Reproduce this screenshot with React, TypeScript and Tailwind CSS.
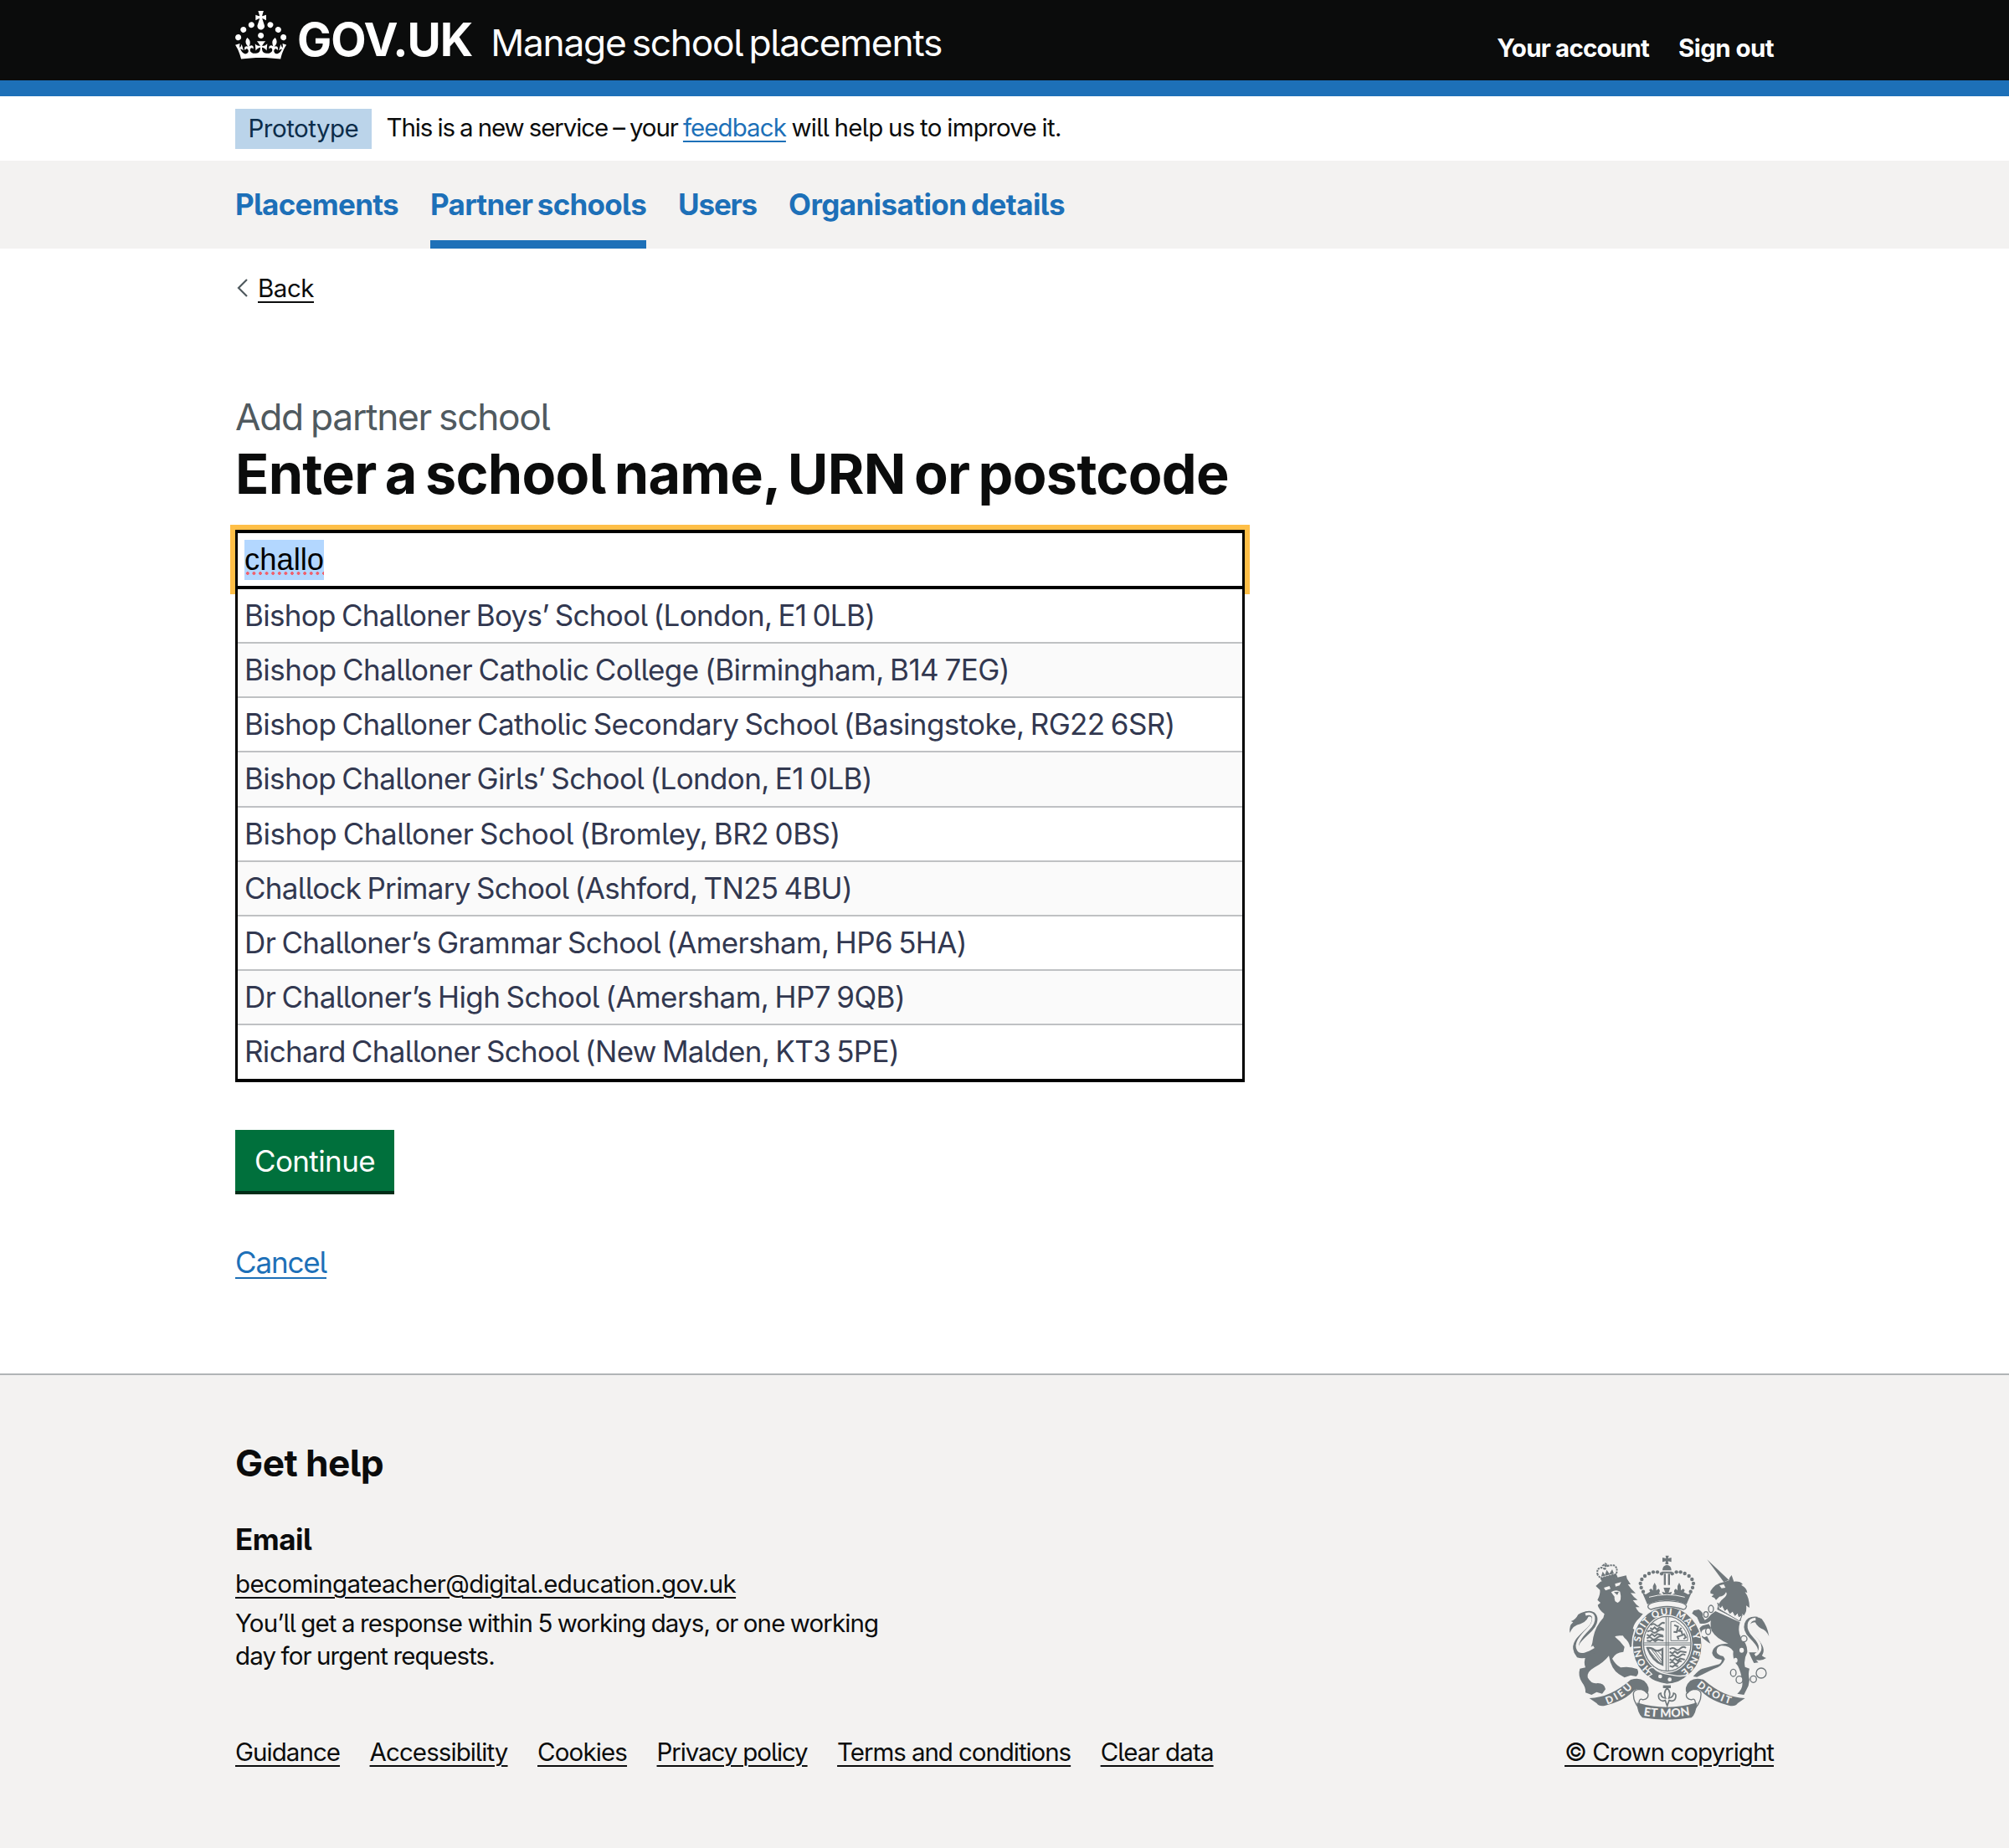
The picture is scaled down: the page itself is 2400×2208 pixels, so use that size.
import React from "react";

const schools = [
  { name: "Bishop Challoner Boys’ School (London, E1 0LB)", tracking: "tracking-[-0.7px]" },
  { name: "Bishop Challoner Catholic College (Birmingham, B14 7EG)", tracking: "tracking-[-0.54px]" },
  { name: "Bishop Challoner Catholic Secondary School (Basingstoke, RG22 6SR)", tracking: "tracking-[-0.62px]" },
  { name: "Bishop Challoner Girls’ School (London, E1 0LB)", tracking: "tracking-[-0.65px]" },
  { name: "Bishop Challoner School (Bromley, BR2 0BS)", tracking: "tracking-[-0.45px]" },
  { name: "Challock Primary School (Ashford, TN25 4BU)", tracking: "tracking-[-0.7px]" },
  { name: "Dr Challoner’s Grammar School (Amersham, HP6 5HA)", tracking: "tracking-[-0.63px]" },
  { name: "Dr Challoner’s High School (Amersham, HP7 9QB)", tracking: "tracking-[-0.57px]" },
  { name: "Richard Challoner School (New Malden, KT3 5PE)", tracking: "tracking-[-0.67px]" },
];

const footerLinks = [
  { label: "Guidance", tracking: "tracking-[-0.96px]" },
  { label: "Accessibility", tracking: "tracking-[-0.91px]" },
  { label: "Cookies", tracking: "tracking-[-0.86px]" },
  { label: "Privacy policy", tracking: "tracking-[-1.11px]" },
  { label: "Terms and conditions", tracking: "tracking-[-1.06px]" },
  { label: "Clear data", tracking: "tracking-[-0.87px]" },
];

function Crown() {
  return (
    <svg viewBox="0 0 32 30" className="mt-[13px] h-[57.5px] w-[61.3px] fill-white" aria-hidden="true">
      <path d="M22.6 10.4c-1 .4-2-.1-2.4-1-.4-.9.1-2 1-2.4.9-.4 2 .1 2.4 1s-.1 2-1 2.4m-5.9 6.7c-.9.4-2-.1-2.4-1-.4-.9.1-2 1-2.4.9-.4 2 .1 2.4 1s-.1 2-1 2.4m10.8-3.7c-1 .4-2-.1-2.4-1-.4-.9.1-2 1-2.4.9-.4 2 .1 2.4 1s0 2-1 2.4m3.3 4.8c-1 .4-2-.1-2.4-1-.4-.9.1-2 1-2.4.9-.4 2 .1 2.4 1s-.1 2-1 2.4M17 4.7l2.3 1.2V2.5l-2.3.7-.2-.2.9-3h-3.4l.9 3-.2.2c-.1.1-2.3-.7-2.3-.7v3.4L15 4.7c.1.1.1.2.2.2l-1.3 4c-.1.2-.1.4-.1.6 0 1.1.8 2 1.9 2.2h.7c1-.2 1.9-1.1 1.9-2.1 0-.2 0-.4-.1-.6l-1.3-4c-.1-.2 0-.2.1-.3m-7.6 5.7c.9.4 2-.1 2.4-1 .4-.9-.1-2-1-2.4-.9-.4-2 .1-2.4 1s0 2 1 2.4m-5 3c.9.4 2-.1 2.4-1 .4-.9-.1-2-1-2.4-.9-.4-2 .1-2.4 1s.1 2 1 2.4m-3.2 4.8c.9.4 2-.1 2.4-1 .4-.9-.1-2-1-2.4-.9-.4-2 .1-2.4 1s0 2 1 2.4m14.8 11c4.4 0 8.6.3 12.3.8 1.1-4.5 2.4-7 3.7-8.8l-2.5-.9c.2 1.3.3 1.9 0 2.7-.4-.4-.8-1.1-1.1-2.3l-1.2 4c.7-.5 1.3-.8 2-.9-1.1 2.5-2.6 3.1-3.5 3-1.1-.2-1.7-1.2-1.5-2.1.3-1.2 1.5-1.5 2.1-.1 1.1-2.3-.8-3-2-2.3 1.9-1.9 2.1-3.5.6-5.6-2.1 1.6-2.1 3.2-1.2 5.5-1.2-1.4-3.2-.6-2.5 1.6.9-1.4 2.1-.5 1.9.8-.2 1.1-1.7 2.1-3.5 1.9-2.7-.2-2.9-2.1-2.9-3.6.7-.1 1.9.5 2.9 1.9l.4-4.3c-1.1 1.1-2.1 1.4-3.2 1.4.4-1.2 2.1-3 2.1-3h-5.4s1.7 1.9 2.1 3c-1.1 0-2.1-.2-3.2-1.4l.4 4.3c1-1.4 2.2-2 2.9-1.9-.1 1.5-.2 3.4-2.9 3.6-1.9.2-3.4-.8-3.5-1.9-.2-1.3 1-2.2 1.9-.8.7-2.3-1.2-3-2.5-1.6.9-2.2.9-3.9-1.2-5.5-1.5 2-1.3 3.7.6 5.6-1.2-.7-3.1 0-2 2.3.6-1.4 1.8-1.1 2.1.1.2.9-.3 1.9-1.5 2.1-.9.2-2.4-.5-3.5-3 .6 0 1.2.3 2 .9l-1.2-4c-.3 1.1-.7 1.9-1.1 2.3-.3-.8-.2-1.4 0-2.7l-2.9.9C1.3 23 2.6 25.5 3.7 30c3.7-.5 7.9-.8 12.3-.8" />
    </svg>
  );
}

const archDots = [[433, 122], [418, 116], [403, 116], [388, 121], [373, 130], [362, 142], [357, 157], [360, 172], [367, 186]];
const chain = [[610, 248, 9, 13], [592, 268, 8, 10], [600, 328, 9, 12], [728, 355, 11, 11], [690, 477, 10, 13], [712, 502, 12, 13], [762, 500, 11, 12], [790, 478, 18, 18]];

function Crest() {
  const g = "#6f777b";
  const l = "#f3f2f1";
  return (
    <svg viewBox="100 55 720 592" className="h-[197.3px] w-[240px]" aria-hidden="true">
      <defs>
        <path id="garter" d="M398 466 A96 108 0 1 1 508 466" />
        <path id="dieu" d="M238 590 Q292 572 334 524" />
        <path id="mon" d="M368 630 Q452 644 540 628" />
        <path id="droit" d="M558 524 Q610 570 682 590" />
      </defs>

      {/* lion */}
      <g fill={g}>
        <path d="M197 166L214 150Q258 140 306 128L309 140L322 160L312 160Q322 176 340 192L322 191Q332 206 347 216L330 217Q340 232 354 242L340 242Q348 262 366 266L354 280Q336 296 330 318L348 332Q366 350 364 372Q372 394 352 396L346 384L338 398L332 378L320 386Q316 364 300 352L294 344Q268 342 266 348Q284 362 300 384L296 402Q268 404 256 426Q268 448 286 458Q318 452 346 464Q354 480 342 490L322 486L300 494L280 482Q252 464 244 416Q226 440 192 458Q164 474 168 494Q182 520 204 514Q228 514 232 536L220 552L200 546L182 556L160 548Q162 530 148 512Q132 488 140 462L160 458Q152 440 162 416Q184 390 188 350Q196 310 224 280L228 266Q206 248 204 234L214 226L203 216Q214 196 212 180Z" />
        <path d="M104 334Q100 308 116 296L108 292Q124 288 134 268Q152 254 172 264Q172 290 142 302Q116 306 104 334Z" />
        <path d="M118 402Q140 424 190 392L172 420Q150 428 130 422Z" />
        <path d="M213 138L270 122L276 136L220 152Z" />
        <path d="M204 126Q198 104 216 100Q226 100 230 108L232 94L224 92L231 86L240 92L236 96Q248 90 262 92Q278 100 270 124L214 138Z" fill="none" stroke={g} strokeWidth="6" strokeDasharray="7 3" />
        <path d="M216 132L222 114L230 126L236 108L246 122L256 106L262 122Z" />
      </g>
      <path d="M150 272C196 250 206 290 176 320C146 350 116 370 128 398C138 420 166 412 186 398" fill="none" stroke={g} strokeWidth="20" />
      <path d="M160 268C196 256 198 292 170 320C142 348 122 374 134 394C142 408 164 400 190 384" fill="none" stroke={l} strokeWidth="10" />
      <path d="M226 172L246 166L250 176L232 182ZM266 158L288 152L282 164L268 168Z" fill={l} />
      <path d="M252 188Q270 176 284 186Q292 220 276 226Q262 222 264 204Z" fill={l} />
      <path d="M262 188L280 186L274 198Z" fill={g} />

      {/* unicorn */}
      <g fill={g}>
        <path d="M596 71L674 144L656 152Z" />
        <path d="M608 184Q626 156 656 152L674 146Q676 134 684 127L692 150Q716 148 724 160L718 162Q740 174 740 190L732 188Q748 208 748 244L736 236Q740 256 728 272L722 266L716 292L632 250Q634 226 660 206Q670 196 664 188Q656 204 640 204L628 216L622 208L612 204L620 196L608 192Z" />
        <path d="M626 256L714 296Q704 330 718 352Q742 374 740 404Q726 430 732 456L748 462Q742 482 748 502L744 524L728 556L704 552Q726 534 722 510Q718 474 706 452Q686 432 690 400Q676 378 646 380Q630 384 630 400Q630 412 654 418L660 428Q650 456 618 464L560 492L546 490Q566 466 580 462L640 446Q650 440 648 430Q618 428 614 406Q618 372 672 372Q630 356 612 326Q606 302 610 290Q594 304 570 300L560 278L542 264L548 254L566 250Q584 260 580 274L588 288Q600 282 610 268Z" />
        <path d="M612 318L592 320Q574 320 574 342L586 350L596 346L608 372L600 368L580 352L566 338Q562 318 580 308L602 302Z" />
        <path d="M818 346Q812 310 792 284Q776 274 762 280Q770 308 790 318Q808 324 818 346Z" />
        <path d="M746 404Q756 428 764 442L780 440L770 430Q792 436 808 424Q792 420 784 404Z" />
      </g>
      <path d="M776 286C736 282 726 316 756 346C786 376 806 404 766 424" fill="none" stroke={g} strokeWidth="20" />
      <path d="M770 284C742 286 736 316 764 346C794 378 792 400 768 414" fill="none" stroke={l} strokeWidth="10" />
      <path d="M640 164L656 160L662 172L648 174Z" fill={l} />
      <path d="M634 226L638 248L712 292L722 270L710 276L706 262L696 272L688 256L678 264L668 246L660 254L650 234L644 244Z" fill={l} stroke={g} strokeWidth="3" />
      {chain.map(([x, y, rx, ry], i) => (
        <ellipse key={i} cx={x} cy={y} rx={rx} ry={ry} fill={l} stroke={g} strokeWidth="4" />
      ))}
      <ellipse cx="720" cy="396" rx="8" ry="9" fill={l} />
      <ellipse cx="698" cy="432" rx="7" ry="9" fill={l} />

      {/* garter and shield */}
      <ellipse cx="453" cy="378" rx="125" ry="138" fill={g} stroke={l} strokeWidth="5" />
      <ellipse cx="453" cy="373" rx="90" ry="104" fill={l} />
      <ellipse cx="453" cy="373" rx="85" ry="98" fill="none" stroke={g} strokeWidth="4" />
      <text fill={l} fontFamily="Lato" fontWeight="900" fontSize="34">
        <textPath href="#garter" textLength="530">HONI SOIT QUI MAL Y PENSE</textPath>
      </text>
      <g fill="none" stroke={g}>
        <path d="M449 276V470M457 276V470M370 370H536M370 377H536" strokeWidth="3" />
        <path d="M394 306q10-8 18 0t16-2 16-4M392 316l8 6 8-8 8 8 10-8 14 6M382 330q10-8 18 0t18-2 24-4M380 340l10 6 8-8 10 8 10-8 20 6M380 354q10-8 18 0t18-2 24-4M380 362l12 2 8-6 10 6 10-6 20 4" strokeWidth="6" />
        <path d="M466 294V362H526V346Q516 310 482 292Z" strokeWidth="3" />
        <path d="M478 306l14 6-4 14 16 2 4 14-18 6 4 10M504 316l-8 10M512 336l8 14-8 6M476 330l14 2" strokeWidth="6" />
        <path d="M462 392q12-8 20 0t18-2 20-2M462 402l10 6 8-8 10 8 10-8 22 4M462 418q12-8 20 0t18-2 18-2M462 428l10 6 8-8 10 8 10-8 16 4M462 442q10-8 16 0t14-2 12-2M462 452l10 4 8-6 12 4" strokeWidth="6" />
        <path d="M382 388Q398 386 408 396Q420 402 436 392V448Q400 434 382 388Z" strokeWidth="7" />
        <path d="M396 392L432 440M408 398L434 432M390 400L424 440M420 400L434 416" strokeWidth="3" />
      </g>
      <path d="M384 468Q392 454 406 460Q420 480 476 486Q506 492 530 484Q500 516 452 518Q404 512 384 490L398 482Z" fill={g} stroke={l} strokeWidth="4" />
      <circle cx="428" cy="490" r="7" fill={l} />
      <circle cx="462" cy="501" r="7" fill={l} />

      {/* crown */}
      <path d="M384 238Q388 222 452 218Q516 222 522 238Q520 250 510 250Q452 228 396 250Q384 248 384 238Z" fill={l} stroke={g} strokeWidth="4" />
      <g fill={g}>
        <path d="M447 57H459L456 67L468 64V80L456 77L458 88H446L448 77L436 80V64L449 67Z" />
        <path d="M436 110Q436 92 452 90Q468 92 468 110Z" />
        <path d="M434 114H470V120H434ZM441 122H448V162H441ZM456 122H463V162H456Z" />
        {archDots.map(([x, y], i) => (
          <React.Fragment key={i}>
            <circle cx={x} cy={y} r="6.5" />
            <circle cx={904 - x} cy={y} r="6.5" />
          </React.Fragment>
        ))}
        <path d="M364 190L376 196L392 186Q384 178 396 176L402 182L402 166L408 154L414 166L414 182L422 176Q430 182 424 192L440 198L434 186L446 190L440 172H464L458 190L470 186L466 198L480 192Q474 182 484 176L490 182V166L496 154L502 166V182L510 176Q520 180 512 188L528 196L540 190L522 232Q452 200 382 232Z" />
      </g>
      <path d="M388 206Q452 188 516 206" fill="none" stroke={l} strokeWidth="3" />

      {/* fleur-de-lis and ribbon */}
      <path d="M438 522H466V532H438Z" fill={g} />
      <path d="M453 532Q438 546 447 568Q430 566 430 550Q418 552 424 570Q432 582 446 576L453 596L460 576Q476 582 482 570Q488 552 476 550Q474 566 459 568Q468 546 453 532Z" fill="none" stroke={g} strokeWidth="5" />
      <path d="M332 556Q330 540 350 536Q372 536 384 552Q388 570 366 574Q352 566 352 586L352 604Q332 580 332 556ZM574 556Q576 540 556 536Q534 536 522 552Q518 570 540 574Q554 566 554 586L554 604Q574 580 574 556Z" fill={l} stroke={g} strokeWidth="4" />
      <path d="M174 568Q250 566 322 502Q372 488 386 530Q388 548 380 552Q360 528 334 540Q300 578 232 594Q210 600 200 586Z" fill={g} />
      <path d="M732 568Q656 566 584 502Q534 488 520 530Q518 548 526 552Q546 528 572 540Q606 578 674 594Q696 600 706 586Z" fill={g} />
      <path d="M344 584Q452 616 560 584Q556 626 540 638Q452 652 364 638Q346 622 344 584Z" fill={g} />
      <g fill={l} fontFamily="Lato" fontWeight="900" fontSize="36">
        <text><textPath href="#dieu" textLength="110">DIEU</textPath></text>
        <text fontSize="42"><textPath href="#mon" textLength="168">ET MON</textPath></text>
        <text><textPath href="#droit" textLength="138">DROIT</textPath></text>
      </g>
    </svg>
  );
}

export default function App() {
  return (
    <div className="min-h-[2208px] bg-white font-['Inter',sans-serif] text-[#0b0c0c] [font-feature-settings:'cv05']">
      <header className="h-[115px] border-b-[19px] border-[#1d70b8] bg-[#0b0c0c] text-white">
        <div className="mx-auto flex w-[1838px] items-start whitespace-nowrap">
          <Crown />
          <span className="mt-[19px] ml-[12.7px] w-[211.3px] text-[55px] leading-[56px] font-bold tracking-[-1px]">GOV.UK</span>
          <span className="mt-[27px] ml-[20px] text-[44.3px] leading-[48px] tracking-[-1.28px] [word-spacing:-4px]">Manage school placements</span>
          <nav className="mt-[39px] ml-auto flex gap-[35px] text-[29.5px] leading-[36px] font-bold">
            <a className="tracking-[-0.8px]">Your account</a>
            <a className="tracking-[-0.57px]">Sign out</a>
          </nav>
        </div>
      </header>

      <div className="mx-auto flex h-[77px] w-[1838px] items-start pt-[15px] text-[29.5px]">
        <strong className="mr-[17.5px] h-[48px] w-[163px] bg-[#bbd4ea] pl-[15.5px] leading-[46px] font-normal tracking-[-0.5px] text-[#0c2d4a]">Prototype</strong>
        <p className="pt-[2px] leading-[41px] tracking-[-1.12px] [word-spacing:-1px]">
          This is a new service – your{" "}
          <a className="tracking-[-0.94px] text-[#1d70b8] underline decoration-2 underline-offset-[5px]">feedback</a>
          <span className="tracking-[-0.74px]"> will help us to improve it.</span>
        </p>
      </div>

      <nav className="h-[105px] bg-[#f3f2f1]">
        <div className="mx-auto flex w-[1838px] gap-[38px] text-[35px] leading-[104px] font-bold text-[#1d70b8] [word-spacing:-2px]">
          <a className="tracking-[-0.7px]">Placements</a>
          <a className="h-[105px] border-b-[10px] border-[#1d70b8] tracking-[-0.72px]">Partner schools</a>
          <a className="tracking-[-1.19px]">Users</a>
          <a className="tracking-[-0.6px]">Organisation details</a>
        </div>
      </nav>

      <main className="mx-auto h-[1344px] w-[1838px] pt-[27px]">
        <a className="flex items-center text-[29.5px] leading-[40px]">
          <svg viewBox="0 0 14 22" className="mr-[12.5px] ml-[0.5px] h-[22px] w-[14px]" fill="none" stroke="#505a5f" strokeWidth="2.2"><path d="M13 1L3 11L13 21" /></svg>
          <span className="tracking-[-0.48px] underline decoration-2 underline-offset-[5px]">Back</span>
        </a>
        <span className="mt-[106px] block text-[44.3px] leading-[56px] tracking-[-1.3px] text-[#505a5f] [word-spacing:-2px]">Add partner school</span>
        <h1 className="mt-[4px] text-[66.5px] leading-[72px] font-bold tracking-[-0.72px] [word-spacing:-4.8px]">Enter a school name, URN or postcode</h1>

        <div className="mt-[31px] w-[1206px]">
          <div className="flex h-[71px] items-center border-x-[3px] border-y-[4px] border-black bg-white pl-[8px] shadow-[0_0_0_6px_#ffbf47]">
            <span className="relative h-[48px] bg-[#b3d7ff] font-['Liberation_Sans',sans-serif] text-[36.4px] leading-[47px] text-black">
              challo
              <span className="absolute inset-x-0 top-[38px] h-[4px] bg-[radial-gradient(circle,#f0606c_1.8px,transparent_2.1px)] bg-[length:7.6px_4px] bg-repeat-x" />
            </span>
          </div>
          <ul className="relative border-x-[3px] border-b-[4px] border-black bg-white text-[35px] leading-[63px] text-[#323850] [word-spacing:-2px]">
            {schools.map(({ name, tracking }) => (
              <li key={name} className={`h-[65.14px] border-b-[2px] border-[#bfc1c3] pl-[8px] last:h-[63.9px] last:border-b-0 even:bg-[#fafafa] ${tracking}`}>{name}</li>
            ))}
          </ul>
        </div>

        <button className="mt-[57px] block h-[73px] w-[190px] bg-[#00703c] text-[35px] leading-[75px] tracking-[-0.6px] text-white shadow-[0_4px_0_#002d18]">Continue</button>
        <a className="mt-[62px] block w-max text-[35px] leading-[46px] tracking-[-1.16px] text-[#1d70b8] underline decoration-2 underline-offset-[5px]">Cancel</a>
      </main>

      <footer className="h-[567px] border-t-2 border-[#b1b4b6] bg-[#f3f2f1] pt-[81px]">
        <div className="mx-auto flex w-[1838px] justify-between">
          <div>
            <h2 className="text-[44.3px] leading-[48px] font-bold tracking-[-0.6px]">Get help</h2>
            <h3 className="mt-[44px] text-[35px] leading-[46px] font-bold tracking-[-0.5px]">Email</h3>
            <div className="mt-[11px] text-[29.5px] leading-[38px]">
              <a className="tracking-[-0.6px] underline decoration-2 underline-offset-[5px]">becomingateacher@digital.education.gov.uk</a>
              <p className="mt-[9px] w-[800px] leading-[38.7px] tracking-[-0.9px] [word-spacing:-1px]">
                You’ll get a response within 5 working days, or one working
                <br />
                day for urgent requests.
              </p>
            </div>
            <div className="mt-[76.6px] flex gap-[35.5px] text-[29.5px] leading-[38px]">
              {footerLinks.map(({ label, tracking }) => (
                <a key={label} className={`underline decoration-2 underline-offset-[5px] ${tracking}`}>{label}</a>
              ))}
            </div>
          </div>
          <div className="flex flex-col items-center pt-[134px] text-[29.5px] leading-[38px]">
            <Crest />
            <a className="mt-[18.3px] tracking-[-1px] underline decoration-2 underline-offset-[5px]">© Crown copyright</a>
          </div>
        </div>
      </footer>
    </div>
  );
}
